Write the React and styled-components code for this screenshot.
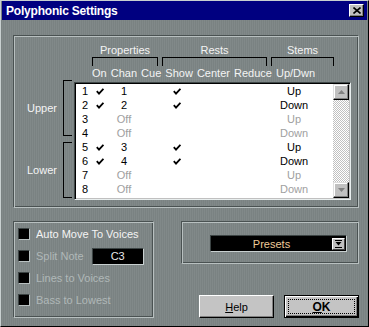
import React from 'react';
import styled, { createGlobalStyle } from 'styled-components';

const GlobalStyle = createGlobalStyle`
  html, body { margin: 0; padding: 0; background: #7d8585; }
  body { font-family: "Liberation Sans", Arial, sans-serif; font-size: 11px; }
`;

const Window = styled.div`
  width: 369px;
  height: 327px;
  box-sizing: border-box;
  border: 1px solid;
  border-color: #c8d0d0 #000 #000 #c8d0d0;
  padding: 0 1px 1px;
  display: flex;
  flex-direction: column;
  background-color: #7d8585;
  background-image: repeating-linear-gradient(90deg, #7a8282 0 1px, #818989 1px 2px);
`;

const TitleBar = styled.div`
  height: 19px;
  flex-shrink: 0;
  background: #000080;
  display: flex;
  align-items: center;
  justify-content: space-between;
  padding: 0 3px 0 4px;
  color: #fff;
  font-weight: bold;
  font-size: 12px;
  letter-spacing: -0.2px;
`;

const CloseBtn = styled.div`
  width: 15px;
  height: 13px;
  box-sizing: border-box;
  background: #c0c0c0;
  border: 1px solid;
  border-color: #fff #000 #000 #fff;
  box-shadow: inset -1px -1px #808080;
  display: flex;
  align-items: center;
  justify-content: center;
`;

const Body = styled.div`
  flex: 1;
  padding: 15px 8px 0 11px;
  display: flex;
  flex-direction: column;
  color: #f4f4f4;
`;

const Etched = styled.div`
  box-sizing: border-box;
  border: 1px solid #4a5252;
  border-right-color: #b8c0c0;
  border-bottom-color: #b8c0c0;
  box-shadow: inset 1px 1px 0 #b8c0c0, inset -1px -1px 0 #4a5252;
`;

const TopGroup = styled(Etched)`
  height: 173px;
  padding-top: 8px;
  display: flex;
  flex-direction: column;
`;

const HeaderRow = styled.div`
  display: flex;
  gap: 4px;
  margin-left: 78px;
`;

const HeaderCol = styled.div`
  width: ${p => p.$w}px;
  display: flex;
  flex-direction: column;
`;

const HeaderTitle = styled.div`
  line-height: 13px;
  text-align: center;
`;

const Bracket = styled.div`
  height: 9px;
  box-sizing: border-box;
  border: 1px solid #000;
  border-bottom: none;
`;

const ColumnLabels = styled.div`
  margin: 1px 0 0 78px;
  line-height: 13px;
  height: 13px;
  white-space: nowrap;
  word-spacing: 1px;
`;

const MainRow = styled.div`
  display: flex;
`;

const SideCol = styled.div`
  width: 60px;
  display: flex;
  flex-direction: column;
  gap: 6px;
`;

const VoiceGroup = styled.div`
  height: 56px;
  display: flex;
  align-items: center;
`;

const VoiceLabel = styled.div`
  width: 49px;
  padding-left: 13px;
  box-sizing: border-box;
`;

const SideBracket = styled.div`
  width: 9px;
  height: 100%;
  box-sizing: border-box;
  border: 1px solid #000;
  border-right: none;
`;

const ListBox = styled.div`
  margin-top: 2px;
  width: 277px;
  height: 118px;
  box-sizing: border-box;
  border: 1px solid;
  border-color: #404848 #e8eeee #e8eeee #404848;
  box-shadow: inset 1px 1px 0 #000, inset -1px -1px 0 #c0c0c0;
  padding: 1px;
  display: flex;
`;

const Rows = styled.div`
  flex: 1;
  background: #fff;
`;

const Row = styled.div`
  height: 14px;
  display: grid;
  grid-template-columns: 16px 16px 32px 21px 32px 35px 35px 62px;
  align-items: center;
  color: #000;
  line-height: 14px;
`;

const Num = styled.div`
  padding-left: 6px;
`;

const Cell = styled.div`
  text-align: center;
  color: ${p => (p.$dim ? '#a0a0a0' : '#000')};
  display: flex;
  justify-content: center;
`;

const ScrollBar = styled.div`
  width: 16px;
  display: flex;
  flex-direction: column;
`;

const ScrollBtn = styled.div`
  width: 16px;
  height: 16px;
  box-sizing: border-box;
  background: #c0c0c0;
  border: 1px solid;
  border-color: #dfdfdf #000 #000 #dfdfdf;
  box-shadow: inset -1px -1px #808080, inset 1px 1px #fff;
  display: flex;
  align-items: center;
  justify-content: center;
`;

const Track = styled.div`
  flex: 1;
  background: repeating-conic-gradient(#c0c0c0 0 25%, #fff 0 50%) 0 0 / 2px 2px;
`;

const BottomRow = styled.div`
  margin-top: 13px;
  display: flex;
  justify-content: space-between;
`;

const LeftGroup = styled(Etched)`
  width: 141px;
  height: 97px;
  padding: 1px 0 0 4px;
`;

const CheckRow = styled.div`
  height: 22px;
  display: flex;
  align-items: center;
  gap: 6px;
  color: ${p => (p.$disabled ? '#b0b8b8' : '#f4f4f4')};
`;

const CheckBox = styled.div`
  width: 12px;
  height: 12px;
  box-sizing: border-box;
  background: #000;
  border: 1px solid;
  border-color: #3c4444 #b8c0c0 #b8c0c0 #3c4444;
`;

const NoteField = styled.div`
  margin-left: 2px;
  width: 52px;
  height: 17px;
  box-sizing: border-box;
  background: #000;
  border: 1px solid;
  border-color: #3c4444 #c8d0d0 #c8d0d0 #3c4444;
  color: #e8e8e8;
  text-align: center;
  line-height: 15px;
`;

const RightCol = styled.div`
  width: 178px;
  display: flex;
  flex-direction: column;
`;

const RightGroup = styled(Etched)`
  height: 43px;
  padding: 13px 0 0 28px;
`;

const PresetsField = styled.div`
  width: 137px;
  height: 17px;
  box-sizing: border-box;
  background: #000;
  border: 1px solid;
  border-color: #3c4444 #c8d0d0 #c8d0d0 #3c4444;
  display: flex;
  align-items: center;
  padding-right: 1px;
`;

const PresetsText = styled.div`
  flex: 1;
  text-align: center;
  color: #efcb98;
`;

const DropBtn = styled.div`
  width: 13px;
  height: 12px;
  box-sizing: border-box;
  background: #c0c0c0;
  border: 1px solid;
  border-color: #fff #404040 #404040 #fff;
  display: flex;
  align-items: center;
  justify-content: center;
`;

const ButtonRow = styled.div`
  margin-top: auto;
  display: flex;
  justify-content: flex-end;
  gap: 10px;
`;

const Button = styled.div`
  width: 75px;
  height: 23px;
  box-sizing: border-box;
  background: #c4c4c4;
  color: #000;
  border: 1px solid;
  border-color: ${p => (p.$default ? '#000' : '#fff #000 #000 #fff')};
  box-shadow: ${p =>
    p.$default
      ? 'inset 1px 1px #fff, inset -1px -1px #000, inset -2px -2px #808080'
      : 'inset -1px -1px #808080'};
  display: flex;
  align-items: center;
  justify-content: center;
  padding: 3px;
  font-weight: ${p => (p.$default ? 'bold' : 'normal')};
  font-size: ${p => (p.$default ? '12px' : '11px')};
`;

const Focus = styled.div`
  flex: 1;
  align-self: stretch;
  border: 1px dotted #000;
  display: flex;
  align-items: center;
  justify-content: center;
`;

const Check = () => (
  <svg width="8" height="7" viewBox="0 0 8 7">
    <path d="M0.8 3.2 L3 5.6 L7.4 0.8" fill="none" stroke="#000" strokeWidth="1.8" />
  </svg>
);

const voices = [
  { n: 1, on: true, chan: '1', show: true, stem: 'Up' },
  { n: 2, on: true, chan: '2', show: true, stem: 'Down' },
  { n: 3, on: false, chan: 'Off', show: false, stem: 'Up' },
  { n: 4, on: false, chan: 'Off', show: false, stem: 'Down' },
  { n: 5, on: true, chan: '3', show: true, stem: 'Up' },
  { n: 6, on: true, chan: '4', show: true, stem: 'Down' },
  { n: 7, on: false, chan: 'Off', show: false, stem: 'Up' },
  { n: 8, on: false, chan: 'Off', show: false, stem: 'Down' },
];

export default function App() {
  return (
    <>
      <GlobalStyle />
      <Window>
        <TitleBar>
          <span>Polyphonic Settings</span>
          <CloseBtn>
            <svg width="8" height="7" viewBox="0 0 8 7">
              <path d="M0.5 0.5 L7.5 6.5 M7.5 0.5 L0.5 6.5" stroke="#000" strokeWidth="1.6" />
            </svg>
          </CloseBtn>
        </TitleBar>
        <Body>
          <TopGroup>
            <HeaderRow>
              <HeaderCol $w={66}>
                <HeaderTitle>Properties</HeaderTitle>
                <Bracket />
              </HeaderCol>
              <HeaderCol $w={105}>
                <HeaderTitle>Rests</HeaderTitle>
                <Bracket />
              </HeaderCol>
              <HeaderCol $w={63}>
                <HeaderTitle>Stems</HeaderTitle>
                <Bracket />
              </HeaderCol>
            </HeaderRow>
            <ColumnLabels>On Chan Cue Show Center Reduce Up/Dwn</ColumnLabels>
            <MainRow>
              <SideCol>
                <VoiceGroup>
                  <VoiceLabel>Upper</VoiceLabel>
                  <SideBracket />
                </VoiceGroup>
                <VoiceGroup>
                  <VoiceLabel>Lower</VoiceLabel>
                  <SideBracket />
                </VoiceGroup>
              </SideCol>
              <ListBox>
                <Rows>
                  {voices.map(v => (
                    <Row key={v.n}>
                      <Num>{v.n}</Num>
                      <Cell>{v.on && <Check />}</Cell>
                      <Cell $dim={!v.on}>{v.chan}</Cell>
                      <Cell />
                      <Cell>{v.show && <Check />}</Cell>
                      <Cell />
                      <Cell />
                      <Cell $dim={!v.on}>{v.stem}</Cell>
                    </Row>
                  ))}
                </Rows>
                <ScrollBar>
                  <ScrollBtn>
                    <svg width="7" height="4" viewBox="0 0 7 4">
                      <path d="M3.5 0 L7 4 L0 4 Z" fill="#808080" />
                    </svg>
                  </ScrollBtn>
                  <Track />
                  <ScrollBtn>
                    <svg width="7" height="4" viewBox="0 0 7 4">
                      <path d="M0 0 L7 0 L3.5 4 Z" fill="#808080" />
                    </svg>
                  </ScrollBtn>
                </ScrollBar>
              </ListBox>
            </MainRow>
          </TopGroup>
          <BottomRow>
            <LeftGroup>
              <CheckRow>
                <CheckBox />
                Auto Move To Voices
              </CheckRow>
              <CheckRow $disabled>
                <CheckBox />
                Split Note
                <NoteField>C3</NoteField>
              </CheckRow>
              <CheckRow $disabled>
                <CheckBox />
                Lines to Voices
              </CheckRow>
              <CheckRow $disabled>
                <CheckBox />
                Bass to Lowest
              </CheckRow>
            </LeftGroup>
            <RightCol>
              <RightGroup>
                <PresetsField>
                  <PresetsText>Presets</PresetsText>
                  <DropBtn>
                    <svg width="7" height="8" viewBox="0 0 7 8">
                      <path d="M0 0.5 H7" stroke="#000" strokeWidth="1" />
                      <path d="M0.5 2 L6.5 2 L3.5 5.5 Z" fill="#000" />
                      <path d="M0 7.5 H7" stroke="#000" strokeWidth="1" />
                    </svg>
                  </DropBtn>
                </PresetsField>
              </RightGroup>
              <ButtonRow>
                <Button>
                  <span><u>H</u>elp</span>
                </Button>
                <Button $default>
                  <Focus>
                    <span><u>O</u>K</span>
                  </Focus>
                </Button>
              </ButtonRow>
            </RightCol>
          </BottomRow>
        </Body>
      </Window>
    </>
  );
}
